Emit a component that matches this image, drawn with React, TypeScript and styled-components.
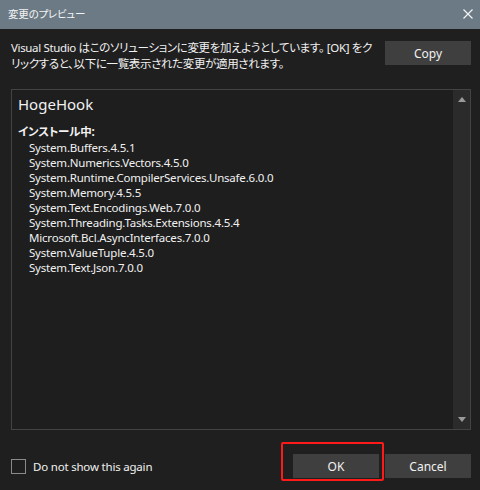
import styled, { createGlobalStyle } from 'styled-components';

const GlobalStyle = createGlobalStyle`
  html, body {
    margin: 0;
    padding: 0;
    background: #1f1f1f;
  }
  * {
    box-sizing: border-box;
  }
`;

const PACKAGES = [
  'System.Buffers.4.5.1',
  'System.Numerics.Vectors.4.5.0',
  'System.Runtime.CompilerServices.Unsafe.6.0.0',
  'System.Memory.4.5.5',
  'System.Text.Encodings.Web.7.0.0',
  'System.Threading.Tasks.Extensions.4.5.4',
  'Microsoft.Bcl.AsyncInterfaces.7.0.0',
  'System.ValueTuple.4.5.0',
  'System.Text.Json.7.0.0',
];

const FONT = `"Noto Sans", "Noto Sans CJK JP", sans-serif`;

const App = () => (
  <>
    <GlobalStyle />
    <Window>
      <TitleBar>
        <Title>変更のプレビュー</Title>
        <CloseIcon viewBox="0 0 10 10">
          <path d="M0.5 0.5 L9.5 9.5 M9.5 0.5 L0.5 9.5" />
        </CloseIcon>
      </TitleBar>
      <Body>
        <HeaderRow>
          <Description>
            <Line>Visual Studio はこのソリューションに変更を加えようとしています。 [OK] をク</Line>
            <Line>リックすると、以下に一覧表示された変更が適用されます。</Line>
          </Description>
          <Button>Copy</Button>
        </HeaderRow>
        <Panel>
          <PanelContent>
            <ProjectName>HogeHook</ProjectName>
            <SectionLabel>インストール中:</SectionLabel>
            {PACKAGES.map((name) => (
              <PackageItem key={name}>{name}</PackageItem>
            ))}
          </PanelContent>
          <ScrollBar>
            <Arrow viewBox="0 0 8 5">
              <path d="M0 5 L4 0 L8 5 Z" />
            </Arrow>
            <Arrow viewBox="0 0 8 5">
              <path d="M0 0 L8 0 L4 5 Z" />
            </Arrow>
          </ScrollBar>
        </Panel>
        <Footer>
          <CheckLabel>
            <CheckBox />
            Do not show this again
          </CheckLabel>
          <ButtonGroup>
            <Highlighted>
              <Button>OK</Button>
            </Highlighted>
            <Button>Cancel</Button>
          </ButtonGroup>
        </Footer>
      </Body>
    </Window>
  </>
);

const Window = styled.div`
  width: 480px;
  height: 490px;
  display: flex;
  flex-direction: column;
  background: #1f1f1f;
  color: #f1f1f1;
  font-family: ${FONT};
  font-size: 11.5px;
  letter-spacing: -0.2px;
  font-feature-settings: 'palt';
`;

const TitleBar = styled.div`
  height: 29px;
  flex-shrink: 0;
  background: #6b7a84;
  display: flex;
  align-items: center;
  justify-content: space-between;
  padding: 0 7px 2px 8px;
`;

const Title = styled.span`
  font-size: 10.5px;
  color: #f4f4f4;
`;

const CloseIcon = styled.svg`
  width: 10px;
  height: 10px;
  stroke: #f4f4f4;
  stroke-width: 1.2;
  fill: none;
`;

const Body = styled.div`
  flex: 1;
  display: flex;
  flex-direction: column;
  padding: 12px 9px 0 11px;
`;

const HeaderRow = styled.div`
  display: flex;
  justify-content: space-between;
  align-items: flex-start;
  height: 32px;
`;

const Description = styled.div`
  flex: 1;
  min-width: 0;
  margin-top: -1px;
  line-height: 16px;
  letter-spacing: -0.35px;
`;

const Line = styled.div`
  white-space: nowrap;
`;

const Button = styled.div`
  width: 86px;
  height: 24px;
  background: #3f3f3f;
  color: #f1f1f1;
  display: flex;
  align-items: center;
  justify-content: center;
  font-size: 12px;
  letter-spacing: 0;
  flex-shrink: 0;
`;

const Panel = styled.div`
  margin-top: 16px;
  height: 341px;
  border: 1px solid #434343;
  background: #1e1e1e;
  display: flex;
`;

const PanelContent = styled.div`
  flex: 1;
  padding: 2px 0 0 6px;
`;

const ProjectName = styled.div`
  font-size: 15px;
  letter-spacing: 0;
  line-height: 24px;
`;

const SectionLabel = styled.div`
  font-weight: 700;
  margin-top: 8px;
  line-height: 16px;
`;

const PackageItem = styled.div`
  padding-left: 11px;
  line-height: 15px;
`;

const ScrollBar = styled.div`
  width: 17px;
  background: #2b2b2b;
  display: flex;
  flex-direction: column;
  justify-content: space-between;
  align-items: center;
  padding: 7px 0 7px;
`;

const Arrow = styled.svg`
  width: 8px;
  height: 5px;
  fill: #9a9a9a;
`;

const Footer = styled.div`
  display: flex;
  justify-content: space-between;
  align-items: center;
  margin-top: 24px;
`;

const CheckLabel = styled.div`
  display: flex;
  align-items: center;
  gap: 7px;
`;

const CheckBox = styled.span`
  width: 15px;
  height: 15px;
  border: 1px solid #8a8a8a;
`;

const ButtonGroup = styled.div`
  display: flex;
  gap: 6px;
`;

const Highlighted = styled.div`
  position: relative;
  &::after {
    content: '';
    position: absolute;
    left: -12px;
    top: -12px;
    right: -5px;
    bottom: -3px;
    border: 2.5px solid #ff1a1a;
    border-radius: 2px;
    pointer-events: none;
  }
`;

export default App;
